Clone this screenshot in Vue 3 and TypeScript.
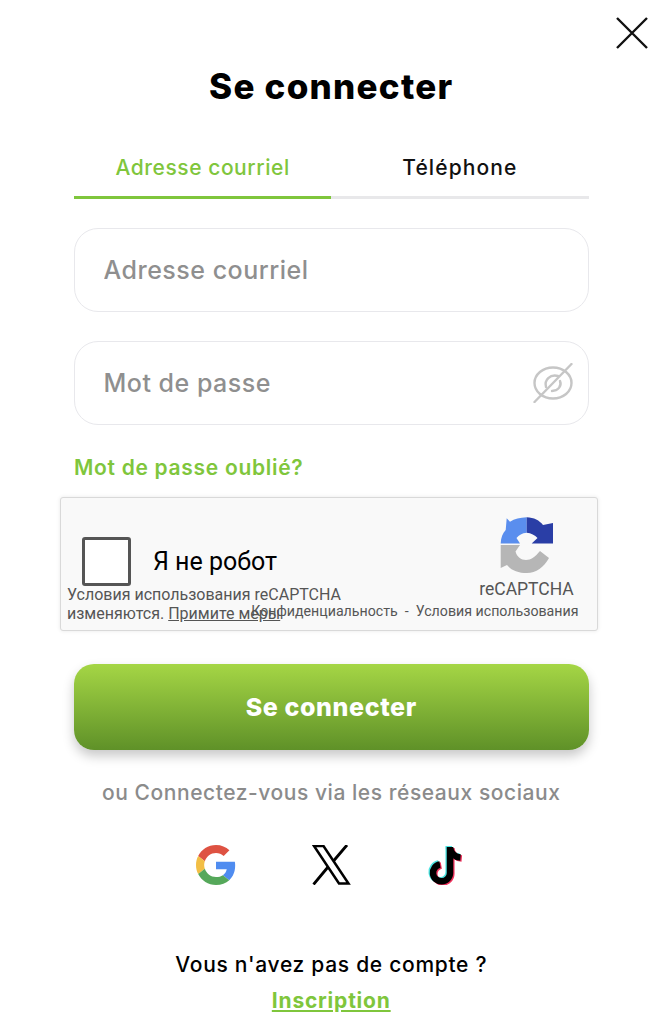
<script setup lang="ts">
import { ref } from 'vue'
const email = ref('')
const password = ref('')
</script>

<template>
  <main class="page">
    <button class="close" aria-label="Fermer">
      <svg width="34" height="34" viewBox="0 0 34 34"><path d="M2 2 L32 32 M32 2 L2 32" stroke="#111" stroke-width="2.4" fill="none"/></svg>
    </button>
    <h1 class="title">Se connecter</h1>
    <div class="tabs">
      <div class="tab active">Adresse courriel</div>
      <div class="tab">Téléphone</div>
    </div>
    <div class="field">
      <input v-model="email" class="input" placeholder="Adresse courriel" />
    </div>
    <div class="field">
      <input v-model="password" class="input" type="password" placeholder="Mot de passe" />
      <svg class="eye" width="40" height="40" viewBox="0 0 40 40" fill="none" stroke="#c6c6c6" stroke-width="2.4" stroke-linecap="round">
        <ellipse cx="20" cy="20" rx="18.5" ry="15.5"/>
        <path d="M13 24 C11 17 17 11 25 13"/>
        <path d="M27 18 C29 23 25 28 19 28"/>
        <path d="M1.500 39 L38.500 1"/>
      </svg>
    </div>
    <a class="forgot">Mot de passe oublié?</a>

    <section class="captcha">
      <div class="captcha-row">
        <div class="check"></div>
        <div class="robot">Я не робот</div>
      </div>
      <div class="brand">
        <svg width="54" height="56" viewBox="0 0 54 56">
          <path d="M0.700 26.500 C1 20.500 2.500 16.500 5.700 13 L6.700 1.300 L10 4.700 C14.500 2 20 0.500 26.700 0.300 V15.700 C22 16 19 18 16.500 21 L20 26.500 Z" fill="#5a8eee"/>
          <path d="M26.700 0.300 C34 0.500 39.500 3.500 43 8 L53 6 V26.500 H31.700 L37.500 21 C35 18 31 16 26.700 15.700 Z" fill="#2a3ea6"/>
          <path d="M0.700 28 H20 L15.500 34.500 C17 40 21 43 26 43 C31 43 35 40 40 34 L49 41 C44 50 36 56 27 56 C18 56 11 53 7 48 L0.700 51 Z" fill="#b6b6b6"/>
        </svg>
        <div class="brand-name">reCAPTCHA</div>
      </div>
      <div class="notice">Условия использования reCAPTCHA<br />изменяются. <u>Примите меры</u></div>
      <div class="legal">Конфиденциальность&nbsp; - &nbsp;Условия использования</div>
    </section>

    <button class="submit">Se connecter</button>
    <p class="via">ou Connectez-vous via les réseaux sociaux</p>

    <div class="socials">
      <svg width="40" height="40" viewBox="0 0 48 48">
        <path fill="#DE5242" d="M24 9.500c3.500 0 6.700 1.200 9.200 3.600l6.900-6.900C35.900 2.400 30.500 0 24 0 14.600 0 6.500 5.400 2.600 13.200l8 6.200C12.500 13.600 17.800 9.500 24 9.500z"/>
        <path fill="#4F8CF0" d="M47 24.500c0-1.600-.1-3.100-.4-4.500H24v9h12.900c-.6 3-2.200 5.500-4.700 7.200l7.700 6C44.400 38 47 31.800 47 24.500z"/>
        <path fill="#F2BE45" d="M10.600 28.600c-.5-1.400-.8-3-.8-4.600s.3-3.200.8-4.600l-8-6.200C.9 16.500 0 20.100 0 24s.9 7.500 2.600 10.800l8-6.200z"/>
        <path fill="#55A85A" d="M24 48c6.500 0 11.900-2.100 15.900-5.800l-7.700-6c-2.200 1.500-4.900 2.300-8.200 2.300-6.200 0-11.500-4.100-13.400-9.900l-8 6.200C6.500 42.600 14.600 48 24 48z"/>
      </svg>
      <svg width="40" height="40" viewBox="0 0 40 40" fill="none" stroke="#000" stroke-width="2.5">
        <path d="M3 1 H12.500 L37.500 38.500 H28 Z"/>
        <path d="M36 0 L22.500 16 M17 22 L2.500 39.500" stroke-width="2.800"/>
      </svg>
      <svg width="40" height="40" viewBox="0 0 40 40">
        <g fill="none" stroke-width="6.500">
          <g stroke="#4be3e0" transform="translate(-1.300 -1)">
            <path d="M24 2 V28 A8.500 8.500 0 1 1 14 19.500"/>
            <path d="M24 3 C25 9 29 12 34.500 12.500"/>
          </g>
          <g stroke="#f0315c" transform="translate(1.300 1)">
            <path d="M24 2 V28 A8.500 8.500 0 1 1 14 19.500"/>
            <path d="M24 3 C25 9 29 12 34.500 12.500"/>
          </g>
          <g stroke="#000">
            <path d="M24 2 V28 A8.500 8.500 0 1 1 14 19.500"/>
            <path d="M24 3 C25 9 29 12 34.500 12.500"/>
          </g>
        </g>
      </svg>
    </div>

    <p class="noaccount">Vous n'avez pas de compte ?</p>
    <a class="signup">Inscription</a>
  </main>
</template>

<style>
html, body { margin: 0; background: #fff; }
</style>

<style scoped>
.page {
  position: relative;
  box-sizing: border-box;
  width: 667px;
  height: 1024px;
  overflow: hidden;
  padding: 64px 78.500px 0 74px;
  display: flex;
  flex-direction: column;
  font-family: Inter, "Open Sans", sans-serif;
  color: #000;
  background: #fff;
}
.close {
  position: absolute;
  top: 16px;
  right: 18px;
  padding: 0;
  border: 0;
  background: none;
  line-height: 0;
}
.title {
  margin: 0;
  font-size: 35px;
  line-height: 44px;
  font-weight: 800;
  text-align: center;
  letter-spacing: 1.25px;
}
.tabs {
  display: flex;
  margin-top: 22px;
}
.tab {
  flex: 1;
  height: 69px;
  box-sizing: border-box;
  padding-top: 22px;
  line-height: 32px;
  font-size: 21px;
  font-weight: 500;
  letter-spacing: 1.1px;
  text-align: center;
  border-bottom: 3px solid #e8e8ea;
  color: #111;
}
.tab.active {
  letter-spacing: 0.55px;
  color: #7fc63c;
  border-bottom-color: #7fc63c;
}
.field {
  position: relative;
  margin-top: 29px;
}
.input {
  display: block;
  box-sizing: border-box;
  width: 100%;
  height: 84px;
  padding: 0 28.500px;
  border: 1px solid #e8e8ec;
  border-radius: 24px;
  font-family: inherit;
  font-size: 25px;
  font-weight: 500;
  letter-spacing: 0.5px;
  outline: none;
  background: #fff;
}
.input::placeholder {
  color: #8f8f8f;
  opacity: 1;
}
.eye {
  position: absolute;
  right: 16px;
  top: 22px;
}
.forgot {
  margin-top: 29px;
  font-size: 21px;
  line-height: 28px;
  font-weight: 600;
  letter-spacing: 0.7px;
  color: #7fc63c;
}
.captcha {
  position: relative;
  box-sizing: border-box;
  width: 538px;
  height: 134px;
  margin: 15px 0 0 -14.500px;
  border: 1px solid #d9d9d9;
  border-radius: 3px;
  background: #f9f9f9;
  box-shadow: 0 0 4px rgba(0, 0, 0, 0.09);
  font-family: Roboto, "Liberation Sans", sans-serif;
}
.captcha-row {
  display: flex;
  align-items: center;
  gap: 22px;
  padding: 39px 0 0 21.500px;
}
.check {
  box-sizing: border-box;
  width: 49px;
  height: 49px;
  border: 3px solid #555;
  border-radius: 3px;
  background: #fff;
}
.robot {
  font-size: 25px;
  color: #000;
}
.brand {
  position: absolute;
  top: 19px;
  right: 18px;
  display: flex;
  flex-direction: column;
  align-items: center;
  width: 104px;
}
.brand-name {
  margin-top: 5px;
  font-size: 17.500px;
  line-height: 22px;
  color: #555;
}
.notice {
  position: absolute;
  left: 6.500px;
  top: 87px;
  font-size: 16px;
  line-height: 19px;
  color: #555;
}
.legal {
  position: absolute;
  right: 18px;
  top: 104px;
  font-size: 14.200px;
  line-height: 18px;
  color: #555;
}
.submit {
  height: 86px;
  margin-top: 33px;
  border: 0;
  border-radius: 20px;
  background: linear-gradient(180deg, #a5d645 0%, #5f9128 100%);
  box-shadow: 0 6px 12px rgba(0, 0, 0, 0.22);
  color: #fff;
  font-family: inherit;
  font-size: 25px;
  font-weight: 800;
  letter-spacing: 0.6px;
}
.via {
  margin: 29px 0 0;
  font-size: 21px;
  line-height: 28px;
  font-weight: 500;
  letter-spacing: 0.55px;
  color: #8b8b8b;
  text-align: center;
}
.socials {
  display: flex;
  justify-content: center;
  align-items: center;
  gap: 75px;
  margin-top: 38px;
}
.noaccount {
  margin: 66px 0 0;
  font-size: 21px;
  line-height: 28px;
  font-weight: 500;
  letter-spacing: 0.7px;
  text-align: center;
}
.signup {
  margin-top: 8px;
  font-size: 21px;
  line-height: 28px;
  font-weight: 700;
  letter-spacing: 0.8px;
  color: #7fc63c;
  text-align: center;
  text-decoration: underline;
}
</style>
